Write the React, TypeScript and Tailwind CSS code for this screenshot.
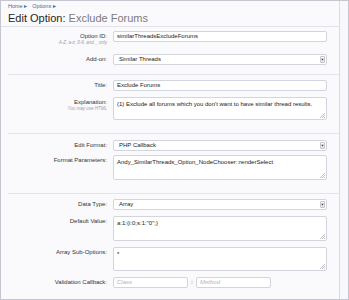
import React from "react";

const font = { fontFamily: '"Liberation Sans", Arial, sans-serif' };

function Label({ text, sub }: { text: string; sub?: string }) {
  return (
    <div className="w-[112px] shrink-0 pr-[6px] text-right">
      <div className="text-[6px] leading-[11px] text-[#333]">{text}</div>
      {sub && (
        <div className="text-[4.5px] leading-[5px] italic text-[#9a9aa6] -mt-[2px]">{sub}</div>
      )}
    </div>
  );
}

function Input({ value, w = "w-[214px]" }: { value: string; w?: string }) {
  return (
    <div
      className={`${w} h-[11px] border border-[#d2d5de] rounded-[2px] bg-white px-[3px] text-[6px] leading-[9px] text-[#1a1a1a] whitespace-nowrap overflow-hidden`}
    >
      {value}
    </div>
  );
}

function Select({ value }: { value: string }) {
  return (
    <div className="w-[214px] h-[11px] border border-[#d2d5de] rounded-[2px] bg-white pl-[5px] pr-[1px] flex items-center justify-between text-[6px] leading-[9px] text-[#1a1a1a]">
      <span>{value}</span>
      <div className="w-[5px] h-[7px] border border-[#c4c6cc] rounded-[1px] bg-gradient-to-b from-[#ffffff] to-[#e2e2e6] flex items-center justify-center">
        <svg width="3" height="3" viewBox="0 0 3 3">
          <path d="M0.3 0.8 L2.7 0.8 L1.5 2.4 Z" fill="#333" />
        </svg>
      </div>
    </div>
  );
}

function Grip() {
  return (
    <svg className="absolute right-[1px] bottom-[1px]" width="5" height="5" viewBox="0 0 5 5">
      <path d="M5 0 L0 5 M5 2 L2 5 M5 4 L4 5" stroke="#a8a8b0" strokeWidth="0.7" />
    </svg>
  );
}

function TextArea({ value, h = "h-[24px]" }: { value: string; h?: string }) {
  return (
    <div
      className={`relative w-[214px] ${h} border border-[#d2d5de] rounded-[2px] bg-white px-[3px] pt-[2px] text-[6px] leading-[8px] text-[#1a1a1a] whitespace-nowrap overflow-hidden`}
    >
      {value}
      <Grip />
    </div>
  );
}

function Sep({ mt }: { mt: string }) {
  return <div className={`${mt} ml-[7px] h-px bg-[#e4e4ec]`} />;
}

export default function App() {
  return (
    <div
      style={font}
      className="w-[349px] h-[300px] border border-[#c6c6d0] bg-[#f7f7fc] overflow-hidden"
    >
      <div className="w-[339px] h-full border-r border-[#dcdce6] bg-[#fafafd]">
        <div className="h-[26px] border-b border-[#e2e2ea] pl-[7px]">
          <div className="h-[11px] text-[5.5px] leading-[11px] text-[#3f6aa0] flex gap-[2px]">
            <span>Home ▸</span>
            <span className="ml-[3px]">Options ▸</span>
          </div>
          <div className="h-[15px] text-[11px] leading-[12px] whitespace-nowrap">
            <span className="text-[#262626]">Edit Option:</span>{" "}
            <span className="text-[#7c7c7c]">Exclude Forums</span>
          </div>
        </div>

        <div className="flex items-start mt-[4px]">
          <Label text="Option ID:" sub="A-Z, a-z, 0-9, and _ only" />
          <Input value="similarThreadsExcludeForums" />
        </div>
        <div className="flex items-start mt-[9px]">
          <Label text="Add-on:" />
          <Select value="Similar Threads" />
        </div>

        <Sep mt="mt-[9px]" />

        <div className="flex items-start mt-[5px]">
          <Label text="Title:" />
          <Input value="Exclude Forums" />
        </div>
        <div className="flex items-start mt-[6px]">
          <Label text="Explanation:" sub="You may use HTML" />
          <TextArea
            h="h-[23px]"
            value="(1) Exclude all forums which you don't want to have similar thread results."
          />
        </div>

        <Sep mt="mt-[13px]" />

        <div className="flex items-start mt-[6px]">
          <Label text="Edit Format:" />
          <Select value="PHP Callback" />
        </div>
        <div className="flex items-start mt-[4px]">
          <Label text="Format Parameters:" />
          <TextArea h="h-[25px]" value="Andy_SimilarThreads_Option_NodeChooser::renderSelect" />
        </div>

        <Sep mt="mt-[13px]" />

        <div className="flex items-start mt-[5px]">
          <Label text="Data Type:" />
          <Select value="Array" />
        </div>
        <div className="flex items-start mt-[6px]">
          <Label text="Default Value:" />
          <TextArea h="h-[25px]" value='a:1:{i:0;s:1:"0";}' />
        </div>
        <div className="flex items-start mt-[6px]">
          <Label text="Array Sub-Options:" />
          <TextArea h="h-[24px]" value="*" />
        </div>
        <div className="flex items-start mt-[6px]">
          <Label text="Validation Callback:" />
          <div className="flex items-center">
            <div className="w-[75px] h-[11px] border border-[#d2d5de] rounded-[2px] bg-white px-[3px] text-[6px] leading-[9px] text-[#b4b4bc] italic">
              Class
            </div>
            <span className="w-[8px] text-center text-[6px] leading-[9px] text-[#555]">::</span>
            <div className="w-[75px] h-[11px] border border-[#d2d5de] rounded-[2px] bg-white px-[3px] text-[6px] leading-[9px] text-[#b4b4bc] italic">
              Method
            </div>
          </div>
        </div>
      </div>
    </div>
  );
}
